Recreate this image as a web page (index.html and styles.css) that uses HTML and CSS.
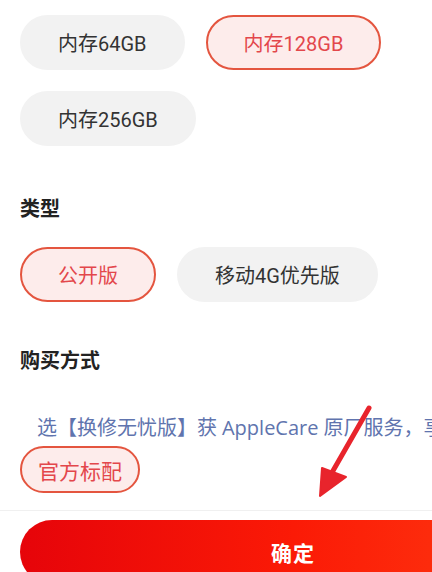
FILE: index.html
```html
<!DOCTYPE html>
<html lang="zh-CN">
<head>
<meta charset="utf-8">
<title>选择规格</title>
<link rel="stylesheet" href="styles.css">
</head>
<body>
<div class="sheet">
  <div class="options">
    <div class="chip-row">
      <span class="chip">内存64GB</span>
      <span class="chip chip--on">内存128GB</span>
      <span class="chip">内存256GB</span>
    </div>

    <h3 class="group-title group-title--type">类型</h3>
    <div class="chip-row">
      <span class="chip chip--on">公开版</span>
      <span class="chip">移动4G优先版</span>
    </div>

    <h3 class="group-title group-title--buy">购买方式</h3>
    <p class="tip">选【换修无忧版】获 <span class="tip-brand">AppleCare</span> 原厂服务<span class="tip-comma">，</span>享</p>
    <div class="chip-row">
      <span class="chip chip--small chip--on">官方标配</span>
    </div>
  </div>

  <div class="footer">
    <button class="confirm" type="button">确定</button>
  </div>

  <svg class="pointer" width="432" height="572" viewBox="0 0 432 572" aria-hidden="true">
    <line x1="369" y1="408" x2="330" y2="476" stroke="#e8242c" stroke-width="5" stroke-linecap="round"/>
    <polygon points="320,496 322,468 346,477" fill="#e8242c" stroke="#e8242c" stroke-width="2" stroke-linejoin="round"/>
  </svg>
</div>
</body>
</html>
```

FILE: styles.css
```css
* {
  box-sizing: border-box;
}

html, body {
  margin: 0;
  padding: 0;
  background: #ffffff;
}

body {
  font-family: Roboto, "Noto Sans CJK SC", "Noto Sans", sans-serif;
  color: #333333;
}

.sheet {
  position: relative;
  width: 432px;
  height: 572px;
  overflow: hidden;
}

.options {
  padding: 15px 0 0 20px;
}

.chip-row {
  display: flex;
  flex-wrap: wrap;
  gap: 21px;
}

.chip {
  display: inline-flex;
  align-items: center;
  justify-content: center;
  height: 55px;
  padding: 0 36px;
  border-radius: 28px;
  background: #f2f2f2;
  border: 2px solid #f2f2f2;
  font-size: 20px;
  color: #333333;
  white-space: nowrap;
}

.chip--on {
  background: #fdeceb;
  border-color: #e4553f;
  color: #e3474b;
}

.chip--small {
  height: 47px;
  padding: 0 16px;
  border-radius: 24px;
  font-size: 21px;
}

.group-title {
  margin: 0;
  font-size: 20px;
  line-height: 28px;
  font-weight: 700;
  color: #222222;
}

.group-title--type {
  margin: 49px 0 24px;
}

.group-title--buy {
  margin: 45px 0 39px;
}

.tip {
  margin: 0 0 5px;
  padding-left: 17px;
  font-size: 20px;
  line-height: 26px;
  color: #6074ae;
  white-space: nowrap;
  overflow: hidden;
}

.tip-brand {
  font-family: "Open Sans", sans-serif;
}

.tip-comma {
  font-family: "Noto Sans CJK TC", sans-serif;
}

.footer {
  margin-top: 17px;
  padding: 9px 0 0 20px;
  border-top: 1px solid #f0f0f0;
}

.confirm {
  display: block;
  width: 546px;
  height: 64px;
  border: 0;
  border-radius: 32px;
  background: linear-gradient(90deg, #e6040a 0%, #fb1a06 50%, #ff3c12 100%);
  color: #ffffff;
  font-family: Roboto, "Noto Sans CJK SC", sans-serif;
  font-size: 21px;
  font-weight: 700;
  letter-spacing: 1px;
  padding: 0;
}

.pointer {
  position: absolute;
  left: 0;
  top: 0;
  pointer-events: none;
}
```
